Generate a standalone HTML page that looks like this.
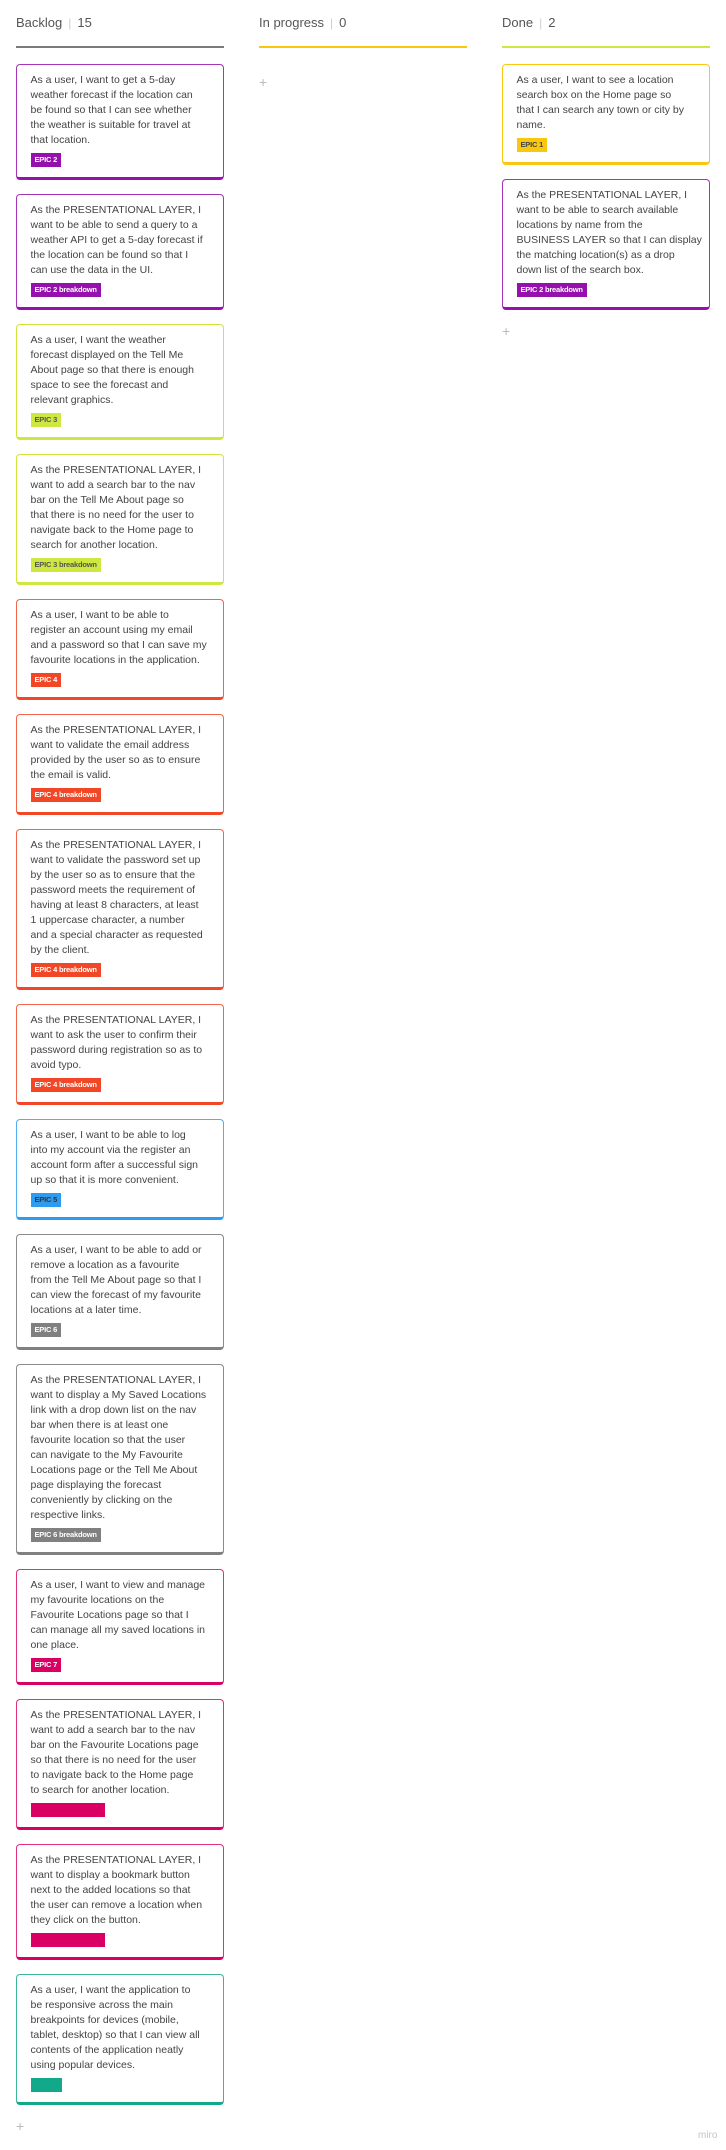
<!DOCTYPE html>
<html><head><meta charset="utf-8">
<style>
*{box-sizing:border-box;margin:0;padding:0}
body{width:726px;height:2150px;background:#fff;font-family:"Liberation Sans",Arial,sans-serif;color:#333;position:relative;overflow:hidden}
.col{position:absolute;top:0;width:208px}
.hd{position:absolute;top:15px;left:0;font-size:13px;color:#555;white-space:nowrap}
.hd .sep{color:#ccc;margin:0 6px;font-size:12px}
.ul{position:absolute;top:46px;left:0;width:208px;height:1.5px}
.card{position:absolute;left:0;width:208px;border:1.5px solid;border-bottom-width:3px;border-radius:4px;background:#fff;padding:7.5px 10px 10px 13.5px}
.t{font-size:10.5px;line-height:15px;white-space:nowrap;color:#444;letter-spacing:0}
.tag{display:inline-block;height:14px;margin-top:5px;font-size:7.5px;font-weight:bold;line-height:14px;padding:0 4px;color:#fff;white-space:nowrap;letter-spacing:-0.2px;vertical-align:top}
.plus{position:absolute;font-size:14px;color:#bbb;font-weight:300}
.pu{border-color:#a733b8;border-bottom-color:#9510ac}.pu .tag{background:#9510ac}
.li{border-color:#d3e33e;border-bottom-color:#cee741}.li .tag{background:#cee741;color:#555}
.re{border-color:#f36548;border-bottom-color:#f24726}.re .tag{background:#f24726}
.bl{border-color:#52aef2;border-bottom-color:#2d9bf0}.bl .tag{background:#2d9bf0;color:#333}
.gr{border-color:#8a8a8a;border-bottom-color:#808080}.gr .tag{background:#808080}
.pk{border-color:#e0327e;border-bottom-color:#da0063}.pk .tag{background:#da0063}
.te{border-color:#3db59a;border-bottom-color:#12a88a}.te .tag{background:#12a88a}
.ye{border-color:#fac710;border-bottom-color:#fac710}.ye .tag{background:#fac710;color:#444}
</style></head><body>

<div class="col" style="left:16px">
<div class="hd">Backlog<span class="sep">|</span>15</div>
<div class="ul" style="background:#7a7a7a"></div>

<div class="card pu" style="top:64px"><div class="t">As a user, I want to get a 5-day<br>weather forecast if the location can<br>be found so that I can see whether<br>the weather is suitable for travel at<br>that location.</div><span class="tag">EPIC 2</span></div>

<div class="card pu" style="top:194px"><div class="t">As the PRESENTATIONAL LAYER, I<br>want to be able to send a query to a<br>weather API to get a 5-day forecast if<br>the location can be found so that I<br>can use the data in the UI.</div><span class="tag">EPIC 2 breakdown</span></div>

<div class="card li" style="top:324px"><div class="t">As a user, I want the weather<br>forecast displayed on the Tell Me<br>About page so that there is enough<br>space to see the forecast and<br>relevant graphics.</div><span class="tag">EPIC 3</span></div>

<div class="card li" style="top:454px"><div class="t">As the PRESENTATIONAL LAYER, I<br>want to add a search bar to the nav<br>bar on the Tell Me About page so<br>that there is no need for the user to<br>navigate back to the Home page to<br>search for another location.</div><span class="tag">EPIC 3 breakdown</span></div>

<div class="card re" style="top:599px"><div class="t">As a user, I want to be able to<br>register an account using my email<br>and a password so that I can save my<br>favourite locations in the application.</div><span class="tag">EPIC 4</span></div>

<div class="card re" style="top:714px"><div class="t">As the PRESENTATIONAL LAYER, I<br>want to validate the email address<br>provided by the user so as to ensure<br>the email is valid.</div><span class="tag">EPIC 4 breakdown</span></div>

<div class="card re" style="top:829px"><div class="t">As the PRESENTATIONAL LAYER, I<br>want to validate the password set up<br>by the user so as to ensure that the<br>password meets the requirement of<br>having at least 8 characters, at least<br>1 uppercase character, a number<br>and a special character as requested<br>by the client.</div><span class="tag">EPIC 4 breakdown</span></div>

<div class="card re" style="top:1004px"><div class="t">As the PRESENTATIONAL LAYER, I<br>want to ask the user to confirm their<br>password during registration so as to<br>avoid typo.</div><span class="tag">EPIC 4 breakdown</span></div>

<div class="card bl" style="top:1119px"><div class="t">As a user, I want to be able to log<br>into my account via the register an<br>account form after a successful sign<br>up so that it is more convenient.</div><span class="tag">EPIC 5</span></div>

<div class="card gr" style="top:1234px"><div class="t">As a user, I want to be able to add or<br>remove a location as a favourite<br>from the Tell Me About page so that I<br>can view the forecast of my favourite<br>locations at a later time.</div><span class="tag">EPIC 6</span></div>

<div class="card gr" style="top:1364px"><div class="t">As the PRESENTATIONAL LAYER, I<br>want to display a My Saved Locations<br>link with a drop down list on the nav<br>bar when there is at least one<br>favourite location so that the user<br>can navigate to the My Favourite<br>Locations page or the Tell Me About<br>page displaying the forecast<br>conveniently by clicking on the<br>respective links.</div><span class="tag">EPIC 6 breakdown</span></div>

<div class="card pk" style="top:1569px"><div class="t">As a user, I want to view and manage<br>my favourite locations on the<br>Favourite Locations page so that I<br>can manage all my saved locations in<br>one place.</div><span class="tag">EPIC 7</span></div>

<div class="card pk" style="top:1699px"><div class="t">As the PRESENTATIONAL LAYER, I<br>want to add a search bar to the nav<br>bar on the Favourite Locations page<br>so that there is no need for the user<br>to navigate back to the Home page<br>to search for another location.</div><span class="tag" style="width:74px"></span></div>

<div class="card pk" style="top:1844px"><div class="t">As the PRESENTATIONAL LAYER, I<br>want to display a bookmark button<br>next to the added locations so that<br>the user can remove a location when<br>they click on the button.</div><span class="tag" style="width:74px"></span></div>

<div class="card te" style="top:1974px"><div class="t">As a user, I want the application to<br>be responsive across the main<br>breakpoints for devices (mobile,<br>tablet, desktop) so that I can view all<br>contents of the application neatly<br>using popular devices.</div><span class="tag" style="width:31px"></span></div>

<div class="plus" style="left:0;top:2118px">+</div>
</div>

<div class="col" style="left:259px">
<div class="hd">In progress<span class="sep">|</span>0</div>
<div class="ul" style="background:#fac710"></div>
<div class="plus" style="left:0;top:74px">+</div>
</div>

<div class="col" style="left:502px">
<div class="hd">Done<span class="sep">|</span>2</div>
<div class="ul" style="background:#cee741"></div>

<div class="card ye" style="top:64px"><div class="t">As a user, I want to see a location<br>search box on the Home page so<br>that I can search any town or city by<br>name.</div><span class="tag">EPIC 1</span></div>

<div class="card pu" style="top:179px"><div class="t">As the PRESENTATIONAL LAYER, I<br>want to be able to search available<br>locations by name from the<br>BUSINESS LAYER so that I can display<br>the matching location(s) as a drop<br>down list of the search box.</div><span class="tag">EPIC 2 breakdown</span></div>

<div class="plus" style="left:0;top:323px">+</div>
</div>

<div style="position:absolute;left:698px;top:2130px;font-size:10px;color:#c4c4cc">miro</div>
</body></html>
